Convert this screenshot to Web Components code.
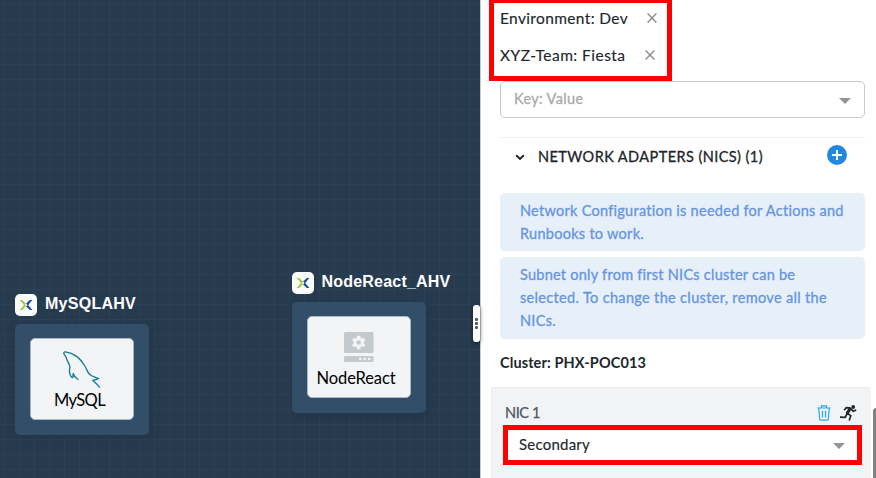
<!DOCTYPE html>
<html lang="en">
<head>
<meta charset="utf-8">
<title>Blueprint editor</title>
<style>
html,body{margin:0;height:100%;overflow:hidden;background:#fff}
body{font:15px/20px Lato,"Open Sans",sans-serif;color:#22272e}
</style>
</head>
<body>
<blueprint-app></blueprint-app>
<script>
const define=(name,html,setup)=>customElements.define(name,class extends HTMLElement{
  connectedCallback(){
    if(this.shadowRoot)return;
    this.attachShadow({mode:'open'}).innerHTML=html;
    if(setup)setup.call(this,this.shadowRoot);
  }
});

/* Single line of text, tracked to fill the width given in "fit". */
define('text-run',`<style>:host{display:block;white-space:pre;flex:none}span{display:inline-block}</style><span></span>`,function(root){
  const s=root.querySelector('span'),t=this.getAttribute('text')||'',w=+this.getAttribute('fit');
  s.textContent=t;
  const n=s.getBoundingClientRect().width;
  if(t&&w)s.style.letterSpacing=((w-n)/t.length)+'px';
});

define('mark-icon',`<style>:host{display:block;flex:none;width:22px;height:22px;background:#fafbfc;border-radius:5px}svg{display:block}</style>
<svg width="22" height="22" viewBox="0 0 22 22" fill="none"><path d="M4.6 6H7.2L11 9.7 9.8 11 11 12.3 7.2 16H4.6L9 11Z" fill="#a8ca3b"/><path d="M17.4 6H14.8L11.1 9.6 12.4 11 11.1 12.4 14.8 16H17.4L13.2 11Z" fill="#1b50a0"/></svg>`);

define('mysql-icon',`<style>:host{display:block;height:40px;width:40px}svg{display:block}</style>
<svg width="40" height="40" viewBox="0 0 40 40" fill="none" stroke="#147d98" stroke-width="1.35" stroke-linecap="round" stroke-linejoin="round"><path d="M27.5 25.2C25.5 23.5 24.8 20 22.5 16.5C20 12.5 16.8 7.8 12 6C10.5 4.6 7.5 3.6 5.4 3.3C3.5 2.4 1.8 3 1.7 4.2C2 5.7 3.4 6.5 4.2 8.6C4.9 11.2 6.7 14 7.6 16.5C8.7 18.6 7.2 20 7.4 22.2C7.7 25 8.7 27.4 9.9 28.4C10.8 29 11.1 27.3 11.2 24.5C11.9 27 13.4 29 16 30.5"/><path d="M27.5 25.2C29.2 27.3 33.5 28.2 36.5 29.6C34.5 30.4 32.3 31 30.8 31.4C33 33.4 35.4 35.4 37.4 38.1"/></svg>`);

define('server-icon',`<style>:host{display:block;width:30px;height:31px}svg{display:block}</style>
<svg width="30" height="31" viewBox="0 0 30 31"><rect width="29.5" height="21" rx="1.5" fill="#c3c9cd"/><rect y="24" width="29.5" height="6" rx="1" fill="#c3c9cd"/><g fill="#f2f4f6"><circle cx="14.7" cy="10.5" r="4.9"/><rect x="12.9" y="3.8" width="3.6" height="13.4" rx=".7"/><rect x="12.9" y="3.8" width="3.6" height="13.4" rx=".7" transform="rotate(60 14.7 10.5)"/><rect x="12.9" y="3.8" width="3.6" height="13.4" rx=".7" transform="rotate(120 14.7 10.5)"/><circle cx="16.3" cy="27" r="1.3"/><circle cx="20.7" cy="27" r="1.3"/><circle cx="25.1" cy="27" r="1.3"/></g><circle cx="14.7" cy="10.5" r="2.3" fill="#c3c9cd"/></svg>`);

define('service-node',`<style>
:host{position:absolute;width:134px;display:block}
.head{display:flex;gap:8px;height:30px}
.title{font:bold 16px/20px "Liberation Sans",Arial,sans-serif;color:#fff}
.card{box-sizing:border-box;height:111px;padding-bottom:1px;border-radius:5px;background:#324e69;box-shadow:2px 3px 9px #1b2b3c66;display:flex;align-items:center;justify-content:center}
.tile{box-sizing:border-box;width:104px;height:82px;background:#f2f4f6;border:1px solid #a9b7c5;border-radius:5px;display:grid;grid-template-rows:51px 20px;justify-items:center;color:#000;font-size:16.5px}
.name{margin-right:5px}
::slotted(*){align-self:end}
</style><div class="head"><mark-icon></mark-icon><div class="title"></div></div><div class="card"><div class="tile"><slot></slot><div class="name"></div></div></div>`,function(root){
  const a=n=>this.getAttribute(n);
  root.querySelector('.title').innerHTML=`<text-run text="${a('heading')}" fit="${a('heading-fit')}"></text-run>`;
  root.querySelector('.name').innerHTML=`<text-run text="${a('label')}" fit="${a('label-fit')}"></text-run>`;
});

define('blueprint-canvas',`<style>
:host{display:block;position:relative;overflow:hidden;background:
linear-gradient(90deg,transparent 4px,#2d4057 4px,#2d4057 5px,transparent 5px) 0 0/15px 15px,
linear-gradient(transparent 4px,#2d4057 4px,#2d4057 5px,transparent 5px) 0 0/15px 15px,#273b4f}
.a{left:15px;top:294px}.b{left:291.5px;top:272px}
mysql-icon{margin-bottom:1px}
.b server-icon{margin-bottom:5px}
</style>
<service-node class="a" heading="MySQLAHV" heading-fit="91" label="MySQL" label-fit="51"><mysql-icon></mysql-icon></service-node>
<service-node class="b" heading="NodeReact_AHV" heading-fit="129" label="NodeReact" label-fit="79"><server-icon></server-icon></service-node>`);

define('drag-handle',`<style>:host{position:absolute;left:473px;top:305px;width:7px;height:37px;border-radius:3px;background:#fff;box-shadow:0 1px 4px #0008;display:flex;flex-direction:column;align-items:center;justify-content:center;gap:1px;z-index:2}i{width:3px;height:3px;background:#555;border-radius:1px}</style><i></i><i></i><i></i>`);

define('tag-row',`<style>:host{display:flex;align-items:center;height:37px;font-size:15.5px;color:#22272e;-webkit-text-stroke:.15px}svg{margin-top:1px}</style><div class="t"></div><svg width="10" height="10" viewBox="0 0 10 10" stroke="#8b8b8b" stroke-width="1.4"><path d="M.6.6 9.4 9.4M9.4.6.6 9.4"/></svg>`,function(root){
  const a=n=>this.getAttribute(n);
  root.querySelector('.t').innerHTML=`<text-run text="${a('text')}" fit="${a('fit')}"></text-run>`;
  root.querySelector('svg').style.marginLeft=a('space')+'px';
});

define('select-box',`<style>:host{box-sizing:border-box;display:flex;align-items:center;justify-content:space-between;background:#fff}i{border:6.5px solid transparent;border-top-color:#959595;border-bottom:0;margin-top:2px}</style><slot></slot><i></i>`);

define('info-note',`<style>:host{display:block;box-sizing:border-box;background:#e7eff9;border-radius:5px;padding:6px 20px 5px;color:#6495e3;font-size:14.5px;line-height:23px;-webkit-text-stroke:.3px #6495e3}</style><slot></slot>`);

define('trash-icon',`<style>:host,svg{display:block}</style><svg width="14" height="16" viewBox="0 0 14 16" fill="none" stroke="#27a4f2" stroke-width="1.2"><path d="M.5 3H13.5M4.5 2.8V.8H9.5V2.8M1.7 3 2.7 14.2Q2.8 15.2 3.8 15.2H10.2Q11.2 15.2 11.3 14.2L12.3 3M5.5 5.8V12.5M8.5 5.8V12.5"/></svg>`);

define('runner-icon',`<style>:host,svg{display:block}</style><svg width="17" height="16" viewBox="0 0 17 16" fill="none" stroke="#20252b" stroke-width="1.7" stroke-linejoin="round"><circle cx="13.2" cy="2" r="1.9" fill="#20252b" stroke="none"/><path d="M4.2 5.3 6.3 2.6 10 2.8 11.6 4.5 13.3 6.3 16.2 5"/><path d="M10.2 3.5 7 8.5" stroke-width="3.2"/><path d="M6.3 7.7 10.8 10.6 9.2 15.4M7 8.6 5.3 12.3 0 12.2"/></svg>`);

define('nic-section',`<style>
:host{display:block;box-sizing:border-box;margin:14px 5px 0 10px;height:92px;background:#f2f3f5;border:1px solid #e9eaec;border-bottom:0;border-right:0;border-radius:3px 3px 0 0;padding:14px 9px 0 11px}
.bar{display:flex;height:23px;align-items:center;justify-content:space-between;padding:0 5px 0 2px;color:#4c5664;font-size:14.5px;-webkit-text-stroke:.25px #4c5664}
.bar text-run{margin-top:-1px}
.icons{display:flex;gap:9px;margin-top:-2px}
select-box{height:40px;border:5px solid #f00;padding:0 12px 0 11px;color:#22272e;font-size:15px;-webkit-text-stroke:.15px}
select-box text-run{margin-top:-3px}
</style><div class="bar"><text-run text="NIC 1" fit="35"></text-run><div class="icons"><trash-icon></trash-icon><runner-icon></runner-icon></div></div><select-box><text-run text="Secondary" fit="71"></text-run></select-box>`);

define('settings-panel',`<style>
:host{display:block;box-sizing:border-box;border-left:1px solid #ccc;background:#fff;overflow:hidden}
.tags{box-sizing:border-box;width:183px;height:81px;margin-left:8px;border:5px solid #f00;border-top-width:3px;padding:0 0 0 6px}
tag-row:first-child{margin-top:-4px}
.body{margin:0 11px 0 19px}
.key{height:37px;border:1px solid #c9c9c9;border-radius:5px;padding:0 13px;color:#aaa;font-size:14.5px;-webkit-text-stroke:.3px #aaa}
.key text-run{margin-top:-2px}
.head{margin-top:19px;border-top:1px solid #eee;height:55px;box-sizing:border-box;display:flex;align-items:flex-start;color:#20252b}
.head text-run{font-size:14.5px;margin:9px 0 0 13px;-webkit-text-stroke:.3px #20252b}
.chev{margin:16px 0 0 15px}.add{margin:7px 18px 0 auto}
info-note{margin-bottom:6px}.n1{height:58px;margin-top:1px}.n2{height:82px;margin-bottom:14px}
.cluster{font-weight:bold;font-size:14.5px;line-height:20px}
</style>
<div class="tags"><tag-row text="Environment: Dev" fit="128" space="19"></tag-row><tag-row text="XYZ-Team: Fiesta" fit="125.5" space="19.5"></tag-row></div>
<div class="body">
<select-box class="key"><text-run text="Key: Value" fit="69.5"></text-run></select-box>
<div class="head"><svg class="chev" width="10" height="7" viewBox="0 0 10 7" fill="none" stroke="#20252b" stroke-width="1.9"><path d="M1.2 1.2 5 4.9 8.8 1.2"/></svg><text-run text="NETWORK ADAPTERS (NICS) (1)" fit="225"></text-run><svg class="add" width="20" height="20" viewBox="0 0 20 20"><circle cx="10" cy="10" r="10" fill="#2088df"/><path d="M10 5V15M5 10H15" stroke="#fff" stroke-width="2"/></svg></div>
<info-note class="n1"><text-run text="Network Configuration is needed for Actions and" fit="324"></text-run><text-run text="Runbooks to work." fit="124"></text-run></info-note>
<info-note class="n2"><text-run text="Subnet only from first NICs cluster can be" fit="275"></text-run><text-run text="selected. To change the cluster, remove all the" fit="307"></text-run><text-run text="NICs." fit="36"></text-run></info-note>
<div class="cluster"><text-run text="Cluster: PHX-POC013" fit="146"></text-run></div>
</div><nic-section></nic-section>`);

define('blueprint-app',`<style>
:host{display:grid;grid-template-columns:480px 396px;height:478px;position:relative;overflow:hidden}
.thumb{position:absolute;right:-4px;top:408px;width:7px;height:80px;border-radius:4px;background:#808080}
</style><blueprint-canvas></blueprint-canvas><settings-panel></settings-panel><drag-handle></drag-handle><div class="thumb"></div>`);
</script>
</body>
</html>
